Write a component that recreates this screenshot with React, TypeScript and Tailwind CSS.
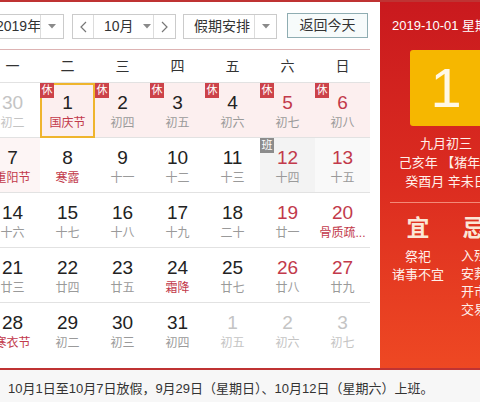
import React from "react";

type Cell = {
  d: string;
  l: string;
  other?: boolean;
  red?: boolean;
  lunarRed?: boolean;
  badge?: "休" | "班";
  bg?: string;
  today?: boolean;
};

const ROWS: Cell[][] = [
  [
    { d: "30", l: "初二", other: true },
    { d: "1", l: "国庆节", lunarRed: true, badge: "休", bg: "bg-[#fcefef]", today: true },
    { d: "2", l: "初四", badge: "休", bg: "bg-[#fcefef]" },
    { d: "3", l: "初五", badge: "休", bg: "bg-[#fcefef]" },
    { d: "4", l: "初六", badge: "休", bg: "bg-[#fcefef]" },
    { d: "5", l: "初七", badge: "休", bg: "bg-[#fcefef]", red: true },
    { d: "6", l: "初八", badge: "休", bg: "bg-[#fcefef]", red: true },
  ],
  [
    { d: "7", l: "重阳节", lunarRed: true, bg: "bg-[#fdf5f5]" },
    { d: "8", l: "寒露", lunarRed: true },
    { d: "9", l: "十一" },
    { d: "10", l: "十二" },
    { d: "11", l: "十三" },
    { d: "12", l: "十四", red: true, badge: "班", bg: "bg-[#f3f3f3]" },
    { d: "13", l: "十五", red: true, bg: "bg-[#f9f9f9]" },
  ],
  [
    { d: "14", l: "十六" },
    { d: "15", l: "十七" },
    { d: "16", l: "十八" },
    { d: "17", l: "十九" },
    { d: "18", l: "二十" },
    { d: "19", l: "廿一", red: true },
    { d: "20", l: "骨质疏...", red: true, lunarRed: true },
  ],
  [
    { d: "21", l: "廿三" },
    { d: "22", l: "廿四" },
    { d: "23", l: "廿五" },
    { d: "24", l: "霜降", lunarRed: true },
    { d: "25", l: "廿七" },
    { d: "26", l: "廿八", red: true },
    { d: "27", l: "廿九", red: true },
  ],
  [
    { d: "28", l: "寒衣节", lunarRed: true },
    { d: "29", l: "初二" },
    { d: "30", l: "初三" },
    { d: "31", l: "初四" },
    { d: "1", l: "初五", other: true },
    { d: "2", l: "初六", other: true },
    { d: "3", l: "初七", other: true },
  ],
];

const WEEK = ["一", "二", "三", "四", "五", "六", "日"];

function Caret() {
  return (
    <svg width="8" height="5" viewBox="0 0 8 5">
      <polygon points="0,0 8,0 4,4.5" fill="#8a8a8a" />
    </svg>
  );
}

function Chevron({ dir }: { dir: "l" | "r" }) {
  return (
    <svg width="7" height="12" viewBox="0 0 7 12">
      <polyline
        points={dir === "l" ? "6,1 1,6 6,11" : "1,1 6,6 1,11"}
        fill="none"
        stroke="#777"
        strokeWidth="1.2"
      />
    </svg>
  );
}

function DayCell({ c }: { c: Cell }) {
  const num = c.other ? "text-[#c4c4c4]" : c.red ? "text-[#c23a4b]" : "text-[#222]";
  const lunar = c.other
    ? "text-[#c4c4c4]"
    : c.lunarRed
    ? "text-[#c23a4b]"
    : "text-[#9a9a9a]";
  return (
    <div className={`relative flex flex-col items-center pt-[10px] ${c.bg ?? ""}`}>
      {c.today && (
        <span className="absolute inset-x-0 top-0 -bottom-px border-2 border-[#efb52e]" />
      )}
      {c.badge && (
        <span
          className={`absolute left-0 top-0 flex h-[15px] w-[14px] items-center justify-center text-[11px] leading-none text-white ${
            c.badge === "休" ? "bg-[#cc4249]" : "bg-[#8c8c8c]"
          }`}
        >
          {c.badge}
        </span>
      )}
      <span className={`text-[19px] leading-[20px] ${num}`}>{c.d}</span>
      <span className={`mt-[2px] text-[12px] leading-[16px] whitespace-nowrap ${lunar}`}>
        {c.l}
      </span>
    </div>
  );
}

export default function App() {
  return (
    <div
      className="h-[402px] w-[480px] overflow-hidden bg-[#f7f7f7]"
      style={{ fontFamily: '"Liberation Sans", "Noto Sans CJK SC", sans-serif' }}
    >
      <div className="-ml-[15px] flex w-[527px] border-y-2 border-[#bf3333] bg-white">
        {/* calendar */}
        <div className="w-[395px] shrink-0">
          <div className="flex h-[47px] items-start pl-[5px] pt-[12px] text-[14px] whitespace-nowrap text-[#333]">
            <div className="flex h-[25px] w-[74px] border border-[#cbcbcb] bg-white">
              <div className="flex w-[49px] items-center pl-[5px]">2019年</div>
              <div className="flex flex-1 items-center justify-center border-l border-[#dcdcdc]">
                <Caret />
              </div>
            </div>
            <div className="ml-[8px] flex h-[25px] w-[104px] border border-[#cbcbcb] bg-white">
              <div className="flex w-[21px] items-center justify-center border-r border-[#dcdcdc]">
                <Chevron dir="l" />
              </div>
              <div className="flex w-[59px] items-center pl-[10px]">
                <span>10月</span>
                <span className="ml-[9px] flex">
                  <Caret />
                </span>
              </div>
              <div className="flex flex-1 items-center justify-center border-l border-[#dcdcdc]">
                <Chevron dir="r" />
              </div>
            </div>
            <div className="ml-[7px] flex h-[25px] w-[94px] border border-[#cbcbcb] bg-white">
              <div className="flex w-[70px] items-center pl-[10px]">假期安排</div>
              <div className="flex flex-1 items-center justify-center border-l border-[#dcdcdc]">
                <Caret />
              </div>
            </div>
            <div className="-mt-px ml-[10px] flex h-[25px] w-[81px] items-center justify-center border border-[#8fadb2] bg-[#f7fbfb]">
              返回今天
            </div>
          </div>

          <div className="w-[385px]">
            <div className="grid h-[34px] grid-cols-7 border-y border-t-[#ddb3b3] border-b-[#e2e2e2] text-[14px] text-[#333]">
              {WEEK.map((w) => (
                <div key={w} className="flex items-center justify-center">
                  {w}
                </div>
              ))}
            </div>
            {ROWS.map((row, i) => (
              <div
                key={i}
                className={`grid h-[55px] grid-cols-7 ${
                  i < ROWS.length - 1 ? "border-b border-[#e2e2e2]" : ""
                }`}
              >
                {row.map((c, j) => (
                  <DayCell key={j} c={c} />
                ))}
              </div>
            ))}
            <div className="h-[10px]" />
          </div>
        </div>

        {/* side panel */}
        <div className="flex w-[132px] shrink-0 flex-col bg-linear-to-b from-[#c9191e] via-[#dc2c20] to-[#ee4823] text-[#fff0ea]">
          <div className="pl-[12px] pt-[16px] text-[13px] leading-[16px] whitespace-nowrap text-white">
            2019-10-01 星期二
          </div>
          <div className="mx-auto mt-[16px] flex h-[76px] w-[72px] items-center justify-center rounded-[3px] bg-[#f6b700]">
            <span className="text-[56px] leading-none text-[#fff8e6]">1</span>
          </div>
          <div className="mt-[8px] flex flex-col items-center text-[13px] leading-[19px] whitespace-nowrap">
            <span>九月初三</span>
            <span>己亥年 【猪年】</span>
            <span>癸酉月 辛未日</span>
          </div>
          <div className="mx-[10px] mt-[11px] h-px bg-[#f38a78]" />
          <div className="mx-[10px] mt-[12px] grid grid-cols-2">
            <div className="flex flex-col items-center">
              <span className="text-[23px] leading-[26px] font-bold text-[#fbe6d6]">宜</span>
              <div className="mt-[7px] flex flex-col items-center text-[13px] leading-[18px] whitespace-nowrap">
                <span>祭祀</span>
                <span>诸事不宜</span>
              </div>
            </div>
            <div className="flex flex-col items-center">
              <span className="text-[23px] leading-[26px] font-bold text-[#fbe6d6]">忌</span>
              <div className="mt-[6px] flex flex-col items-center text-[13px] leading-[18px] whitespace-nowrap">
                <span>入殓</span>
                <span>安葬</span>
                <span>开市</span>
                <span>交易</span>
              </div>
            </div>
          </div>
        </div>
      </div>

      <div className="pl-[8px] pt-[9px] text-[13px] leading-[20px] whitespace-nowrap text-[#333]">
        10月1日至10月7日放假，9月29日（星期日）、10月12日（星期六）上班。
      </div>
    </div>
  );
}
